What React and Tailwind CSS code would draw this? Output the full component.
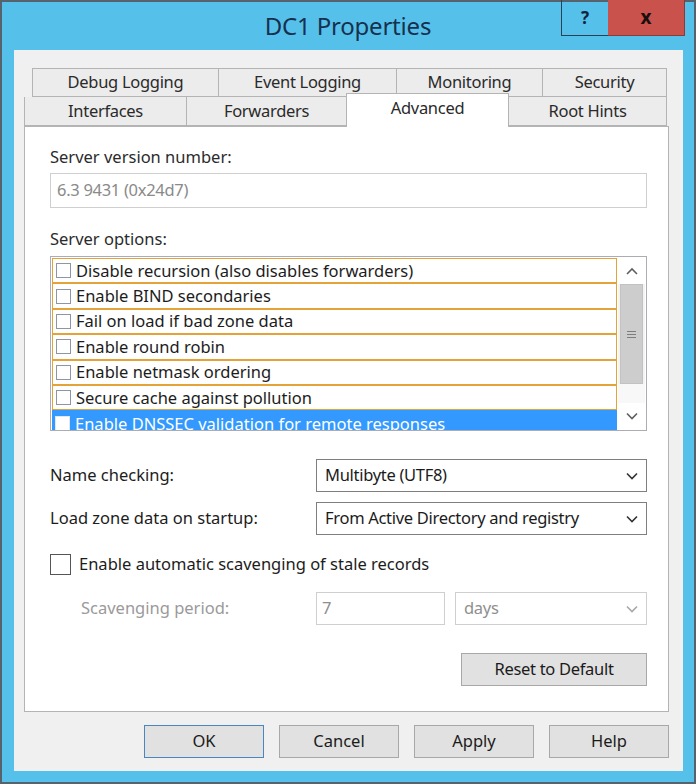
import React from "react";

const font = { fontFamily: '"Noto Sans", "Open Sans", sans-serif' };

function Chevron({ className = "", up = false }) {
  return (
    <svg width="12" height="8" viewBox="0 0 12 8" className={className}>
      <path
        d={up ? "M1 7 L6 2 L11 7" : "M1 1.5 L6 6.5 L11 1.5"}
        fill="none"
        stroke="currentColor"
        strokeWidth="1.6"
      />
    </svg>
  );
}

function Box({ className = "" }) {
  return <span className={"inline-block w-[15px] h-[15px] border border-[#8c96a4] bg-white shrink-0 " + className} />;
}

const topTabs = [
  { label: "Debug Logging", w: "w-[186px]" },
  { label: "Event Logging", w: "w-[178px]" },
  { label: "Monitoring", w: "w-[146px]" },
  { label: "Security", w: "w-[125px]" },
];

const options = [
  "Disable recursion (also disables forwarders)",
  "Enable BIND secondaries",
  "Fail on load if bad zone data",
  "Enable round robin",
  "Enable netmask ordering",
  "Secure cache against pollution",
];

function Select({ value, disabled = false, className = "" }) {
  return (
    <div
      className={
        "flex items-center justify-between h-[33px] bg-white border pl-[8px] pr-[8px] " +
        (disabled ? "border-[#cfcfcf] text-[#8f8f8f]" : "border-[#7f7f7f] text-[#1b1b1b]") +
        " " +
        className
      }
    >
      <span className="tracking-[-0.3px]">{value}</span>
      <Chevron className={disabled ? "text-[#a8a8a8]" : "text-[#333]"} />
    </div>
  );
}

function Button({ children, className = "" }) {
  return (
    <div
      className={
        "flex items-center justify-center h-[33px] bg-[#e1e1e1] border text-[#1b1b1b] " + className
      }
    >
      {children}
    </div>
  );
}

export default function App() {
  return (
    <div
      style={font}
      className="w-[696px] h-[784px] bg-[#55c1ea] border-2 border-[#56626c] flex flex-col text-[16.5px] text-[#1c1c1c]"
    >
      {/* title bar */}
      <div className="relative h-[48px] shrink-0 flex items-center justify-center">
        <span className="text-[24px] text-[#17304f] tracking-[-0.2px]">DC1 Properties</span>
        <div className="absolute right-[9px] top-[-2px] flex h-[36px]">
          <div className="w-[47px] flex items-center justify-center border-l border-b border-[#2b3f55] text-[#14243a] font-bold text-[17px]">
            ?
          </div>
          <div className="w-[77px] flex items-center justify-center bg-[#c9534c] border-b border-r border-[#8c3a35] text-[#1a0f0f] font-bold text-[19px]">
            x
          </div>
        </div>
      </div>

      {/* client area */}
      <div className="flex-1 ml-[12px] mr-[11px] mb-[11px] bg-[#f0f0f0] flex flex-col pt-[18px] pl-[10px] pr-[13px]">
        {/* tab strip */}
        <div className="flex flex-col">
          <div className="flex pl-[8px] h-[29px]">
            {topTabs.map((t) => (
              <div
                key={t.label}
                className={t.w + " flex items-center justify-center bg-[#ececec] border border-r-0 last:border-r border-[#b4b4b4] text-[#2a2a2a] tracking-[-0.3px]"}
              >
                {t.label}
              </div>
            ))}
          </div>
          <div className="flex h-[29px] items-end tracking-[-0.3px]">
            <div className="w-[162px] h-[29px] flex items-center justify-center bg-[#ececec] border border-t-0 border-r-0 border-[#b4b4b4] text-[#2a2a2a]">
              Interfaces
            </div>
            <div className="w-[160px] h-[29px] flex items-center justify-center bg-[#ececec] border border-t-0 border-r-0 border-[#b4b4b4] text-[#2a2a2a]">
              Forwarders
            </div>
            <div className="relative z-10 w-[163px] h-[34px] flex justify-center pt-[2px] bg-white border border-b-0 border-[#b4b4b4] -mb-px text-[#2a2a2a]">
              Advanced
            </div>
            <div className="w-[158px] h-[29px] flex items-center justify-center bg-[#ececec] border border-t-0 border-l-0 border-[#b4b4b4] text-[#2a2a2a]">
              Root Hints
            </div>
          </div>
        </div>

        {/* tab page */}
        <div className="h-[586px] w-[645px] bg-white border border-[#b4b4b4] pl-[25px] pr-[21px] pt-[20px] flex flex-col">
          <div className="h-[20px] leading-[20px] text-[#2b2b2b]">Server version number:</div>
          <div className="mt-[6px] h-[35px] border border-[#cfcfcf] flex items-center pl-[6px] text-[#8a8a8a] tracking-[-0.3px]">
            6.3 9431 (0x24d7)
          </div>

          <div className="mt-[21px] h-[20px] leading-[20px] text-[#2b2b2b]">Server options:</div>
          <div className="mt-[7px] h-[175px] border border-[#abadb3] flex">
            <div className="flex-1 overflow-hidden pt-px pl-px pr-px flex flex-col">
              {options.map((o) => (
                <div
                  key={o}
                  className="h-[25.4px] shrink-0 flex items-center gap-[5px] border border-[#e3a338] pl-[3px]"
                >
                  <Box />
                  <span className="leading-[18px]">{o}</span>
                </div>
              ))}
              <div className="h-[25.4px] shrink-0 flex items-start gap-[5px] bg-[#3399ff] pl-[3px] pt-[6px] text-white overflow-hidden">
                <Box className="border-[#dfe9f5]" />
                <span className="leading-[18px] -mt-[1px]">Enable DNSSEC validation for remote responses</span>
              </div>
            </div>
            {/* scrollbar */}
            <div className="w-[27px] my-px mr-px bg-[#f4f4f4] flex flex-col">
              <div className="h-[26px] flex items-center justify-center text-[#606060] bg-white">
                <Chevron up />
              </div>
              <div className="h-[100px] mx-[2px] bg-[#cdcdcd] border border-[#c2c2c2] flex flex-col items-center justify-center gap-[2px]">
                <span className="w-[9px] h-px bg-[#7d7d7d]" />
                <span className="w-[9px] h-px bg-[#7d7d7d]" />
                <span className="w-[9px] h-px bg-[#7d7d7d]" />
              </div>
              <div className="flex-1 bg-[#f8f8f8]" />
              <div className="h-[26px] flex items-center justify-center text-[#606060] bg-white">
                <Chevron />
              </div>
            </div>
          </div>

          <div className="mt-[28px] flex items-center h-[33px]">
            <span className="w-[266px]">Name checking:</span>
            <Select value="Multibyte (UTF8)" className="flex-1" />
          </div>
          <div className="mt-[10px] flex items-center h-[33px]">
            <span className="w-[266px]">Load zone data on startup:</span>
            <Select value="From Active Directory and registry" className="flex-1" />
          </div>

          <div className="mt-[18px] flex items-center gap-[8px] h-[22px]">
            <span className="inline-block w-[21px] h-[21px] border border-[#555] bg-white" />
            <span>Enable automatic scavenging of stale records</span>
          </div>

          <div className="mt-[17px] flex items-center h-[33px]">
            <span className="w-[266px] pl-[31px] text-[#9a9a9a]">Scavenging period:</span>
            <div className="w-[129px] h-[33px] border border-[#cfcfcf] flex items-center pl-[5px] text-[#8f8f8f]">7</div>
            <Select value="days" disabled className="flex-1 ml-[10px]" />
          </div>

          <div className="mt-[28px] flex justify-end">
            <Button className="w-[186px] border-[#a8a8a8] tracking-[-0.3px]">Reset to Default</Button>
          </div>
        </div>

        {/* dialog buttons */}
        <div className="mt-[13px] flex justify-end gap-[15px] pr-[1px]">
          <Button className="w-[120px] border-[#4a87bf]">OK</Button>
          <Button className="w-[120px] border-[#a8a8a8]">Cancel</Button>
          <Button className="w-[120px] border-[#a8a8a8]">Apply</Button>
          <Button className="w-[120px] border-[#a8a8a8]">Help</Button>
        </div>
      </div>
    </div>
  );
}
